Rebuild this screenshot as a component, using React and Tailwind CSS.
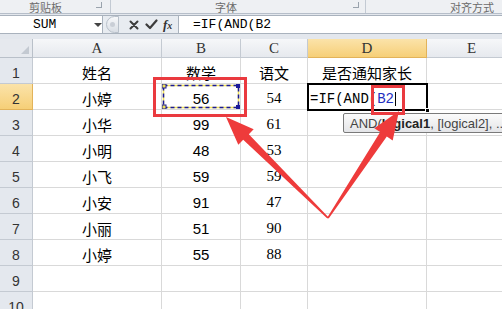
import React from 'react';

const cols = ['A', 'B', 'C', 'D', 'E'];
const rows = [
  ['姓名', '数学', '语文', '是否通知家长', ''],
  ['小婷', '56', '54', '', ''],
  ['小华', '99', '61', '', ''],
  ['小明', '48', '53', '', ''],
  ['小飞', '59', '59', '', ''],
  ['小安', '91', '47', '', ''],
  ['小丽', '51', '90', '', ''],
  ['小婷', '55', '88', '', ''],
  ['', '', '', '', ''],
  ['', '', '', '', ''],
];

const cjk = "font-['SimSun','Noto_Sans_CJK_SC',sans-serif]";
const mono = "font-['Liberation_Mono','Noto_Sans_CJK_SC',monospace]";

// marching-ants box around the copied cell
function Marquee() {
  return (
    <svg className="absolute left-0 top-0" width="78" height="25" viewBox="0 0 78 25">
      <rect x="1.5" y="1.5" width="75" height="22" fill="none" stroke="#f1e25a" strokeWidth="1.5" />
      <rect x="1.5" y="1.5" width="75" height="22" fill="none" stroke="#1a1a9a" strokeWidth="1.5" strokeDasharray="4 3" />
      <rect x="0" y="0" width="4" height="4" fill="#f1e25a" stroke="#1a1a9a" strokeWidth="1" />
      <rect x="74" y="0" width="4" height="4" fill="#1a1a9a" />
      <rect x="0" y="21" width="4" height="4" fill="#f1e25a" stroke="#1a1a9a" strokeWidth="1" />
      <rect x="74" y="21" width="4" height="4" fill="#1a1a9a" />
    </svg>
  );
}

function Cell({ r, c, value }) {
  let font = cjk;
  if (c === 1 && r > 0) font = "font-['Liberation_Sans',sans-serif]";
  if (c === 2 && r > 0) font = "font-['Liberation_Serif',serif]";
  return (
    <div className={`relative flex items-end justify-center pb-[3px] border-r border-b border-[#d9d9d9] text-[15px] leading-none text-black ${font}`}>
      {value}
      {r === 1 && c === 1 && <Marquee />}
      {r === 1 && c === 3 && (
        <div className="absolute -left-[1px] -top-[1px] w-[121px] h-[28px] border-2 border-black flex items-end pb-[3px] pl-[1px] z-10">
          <span className={`${mono} text-[14px] leading-none text-black`}>=IF(AND(</span>
          <span className={`${mono} text-[14px] leading-none text-[#1f2fbf]`}>B2</span>
          <span className="w-px h-[14px] bg-black ml-[1px]" />
          <span className="absolute -right-[4px] -bottom-[4px] w-[5px] h-[5px] bg-black border border-white" />
        </div>
      )}
    </div>
  );
}

export default function App() {
  return (
    <div className="relative w-[502px] h-[309px] overflow-hidden bg-white select-none">
      {/* ribbon group labels */}
      <div className="h-[14px] bg-[#eef0f3] border-b border-[#b6bec9] flex text-[11px] leading-[12px] text-[#6b6b6b] font-['Noto_Sans_CJK_SC',sans-serif]">
        <div className="w-[111px] flex items-center border-r border-[#c3cad3]">
          <span className="ml-[29px]">剪贴板</span>
          <span className="ml-auto mr-[8px] mb-[3px] w-[6px] h-[6px] border-r border-b border-[#9aa3ad]" />
        </div>
        <div className="w-[255px] flex items-center border-r border-[#c3cad3]">
          <span className="ml-[104px]">字体</span>
          <span className="ml-auto mr-[6px] mb-[3px] w-[6px] h-[6px] border-r border-b border-[#9aa3ad]" />
        </div>
        <div className="flex-1 flex items-center">
          <span className="ml-[84px] whitespace-nowrap">对齐方式</span>
        </div>
      </div>

      {/* formula bar */}
      <div className="h-[25px] bg-[#e3e7ed] pt-[1px] pb-[5px]">
        <div className="h-[19px] flex items-stretch">
          <div className="w-[103px] bg-white border-y border-r border-[#a9b2bd] flex items-center relative">
            <span className={`${mono} text-[13px] leading-none ml-[33px] text-black`}>SUM</span>
            <span className="absolute left-[94px] top-[7px] w-0 h-0 border-l-[4px] border-r-[4px] border-t-[4px] border-l-transparent border-r-transparent border-t-[#444]" />
          </div>
          <div className="w-[75px] flex items-center bg-[#e8ecf1] border-y border-[#a9b2bd]">
            <span className="ml-[3px] w-[13px] h-[17px] rounded-l-full border border-[#b8c0ca] bg-gradient-to-b from-[#f7f8fa] to-[#d9dee5] flex items-center pl-[3px]">
              <span className="w-[5px] h-[5px] rounded-full bg-[#c9ced6]" />
            </span>
            <svg width="10" height="10" viewBox="0 0 10 10" className="ml-[10px]">
              <path d="M1.5 1.5 L8.5 8.5 M8.5 1.5 L1.5 8.5" stroke="#3c3c3c" strokeWidth="2" strokeLinecap="round" />
            </svg>
            <svg width="13" height="11" viewBox="0 0 13 11" className="ml-[6px]">
              <path d="M1.5 5.5 L5 9 L11.5 1.5" stroke="#3c3c3c" strokeWidth="2.2" fill="none" strokeLinecap="round" strokeLinejoin="round" />
            </svg>
            <span className="ml-[5px] font-['Liberation_Serif',serif] italic font-bold text-[13px] leading-none text-[#333]">f<span className="text-[10px]">x</span></span>
          </div>
          <div className="flex-1 bg-white border-y border-l border-[#a9b2bd] flex items-center pl-[14px]">
            <span className={`${mono} text-[13px] leading-none text-black`}>=IF(AND(B2</span>
          </div>
        </div>
      </div>

      {/* sheet */}
      <div className="grid grid-cols-[33px_129px_79px_67px_119px_90px] grid-rows-[19px_repeat(10,26px)]">
        <div className="bg-[#e6e9ee] border-r border-b border-[#b9c0c9] relative">
          <svg width="8" height="8" viewBox="0 0 8 8" className="absolute right-[3px] bottom-[3px]">
            <path d="M8 0 L8 8 L0 8 Z" fill="#c3c9d1" />
          </svg>
        </div>
        {cols.map((c, i) => (
          <div
            key={c}
            className={`flex items-center justify-center border-r border-b text-[15px] leading-none font-['Liberation_Serif',serif] ${
              i === 3
                ? 'bg-gradient-to-b from-[#fbe3a9] to-[#f6cf77] border-[#e2b35a] text-[#333]'
                : 'bg-gradient-to-b from-[#f6f7f9] to-[#e6e9ee] border-[#c4cad2] text-[#333]'
            }`}
          >
            {c}
          </div>
        ))}
        {rows.map((row, r) => (
          <React.Fragment key={r}>
            <div
              className={`flex items-end justify-center pb-[3px] border-r border-b text-[14px] leading-none font-['Liberation_Sans',sans-serif] text-[#333] ${
                r === 1
                  ? 'bg-gradient-to-b from-[#fbe3a9] to-[#f6cf77] border-[#e2b35a]'
                  : 'bg-[#e4e8ee] border-[#c4cad2]'
              }`}
            >
              {r + 1}
            </div>
            {row.map((v, c) => (
              <Cell key={c} r={r} c={c} value={v} />
            ))}
          </React.Fragment>
        ))}
      </div>

      {/* function tooltip */}
      <div className="absolute left-[343px] top-[113px] w-[175px] h-[20px] rounded-[2px] border border-[#7a7a7a] bg-gradient-to-b from-[#fbfbfb] to-[#e4e5e8] flex items-center pl-[6px] text-[13px] leading-none text-[#444] font-['Liberation_Sans',sans-serif] whitespace-nowrap z-20">
        AND(<b className="text-[#222]">logical1</b>, [logical2], ...
      </div>

      {/* annotation boxes */}
      <div className="absolute left-[153px] top-[77px] w-[94px] h-[40px] border-[3px] border-[#ea3a3f] z-20" />
      <div className="absolute left-[371px] top-[85px] w-[34px] h-[30px] border-[3px] border-[#ea3a3f] z-20" />

      {/* arrows */}
      <svg className="absolute left-0 top-0 z-30 pointer-events-none" width="502" height="309" viewBox="0 0 502 309">
        <polygon
          points="327.3,218.6 243.2,139.8 238.3,144.8 226,117 253.7,129.2 248.8,134.2 328.7,217.4"
          fill="#ee3b3b"
        />
        <polygon
          points="327.3,217.6 380.2,132.1 374.3,128.2 399,111 392.7,140.4 386.8,136.5 328.7,218.6"
          fill="#ee3b3b"
        />
      </svg>
    </div>
  );
}
